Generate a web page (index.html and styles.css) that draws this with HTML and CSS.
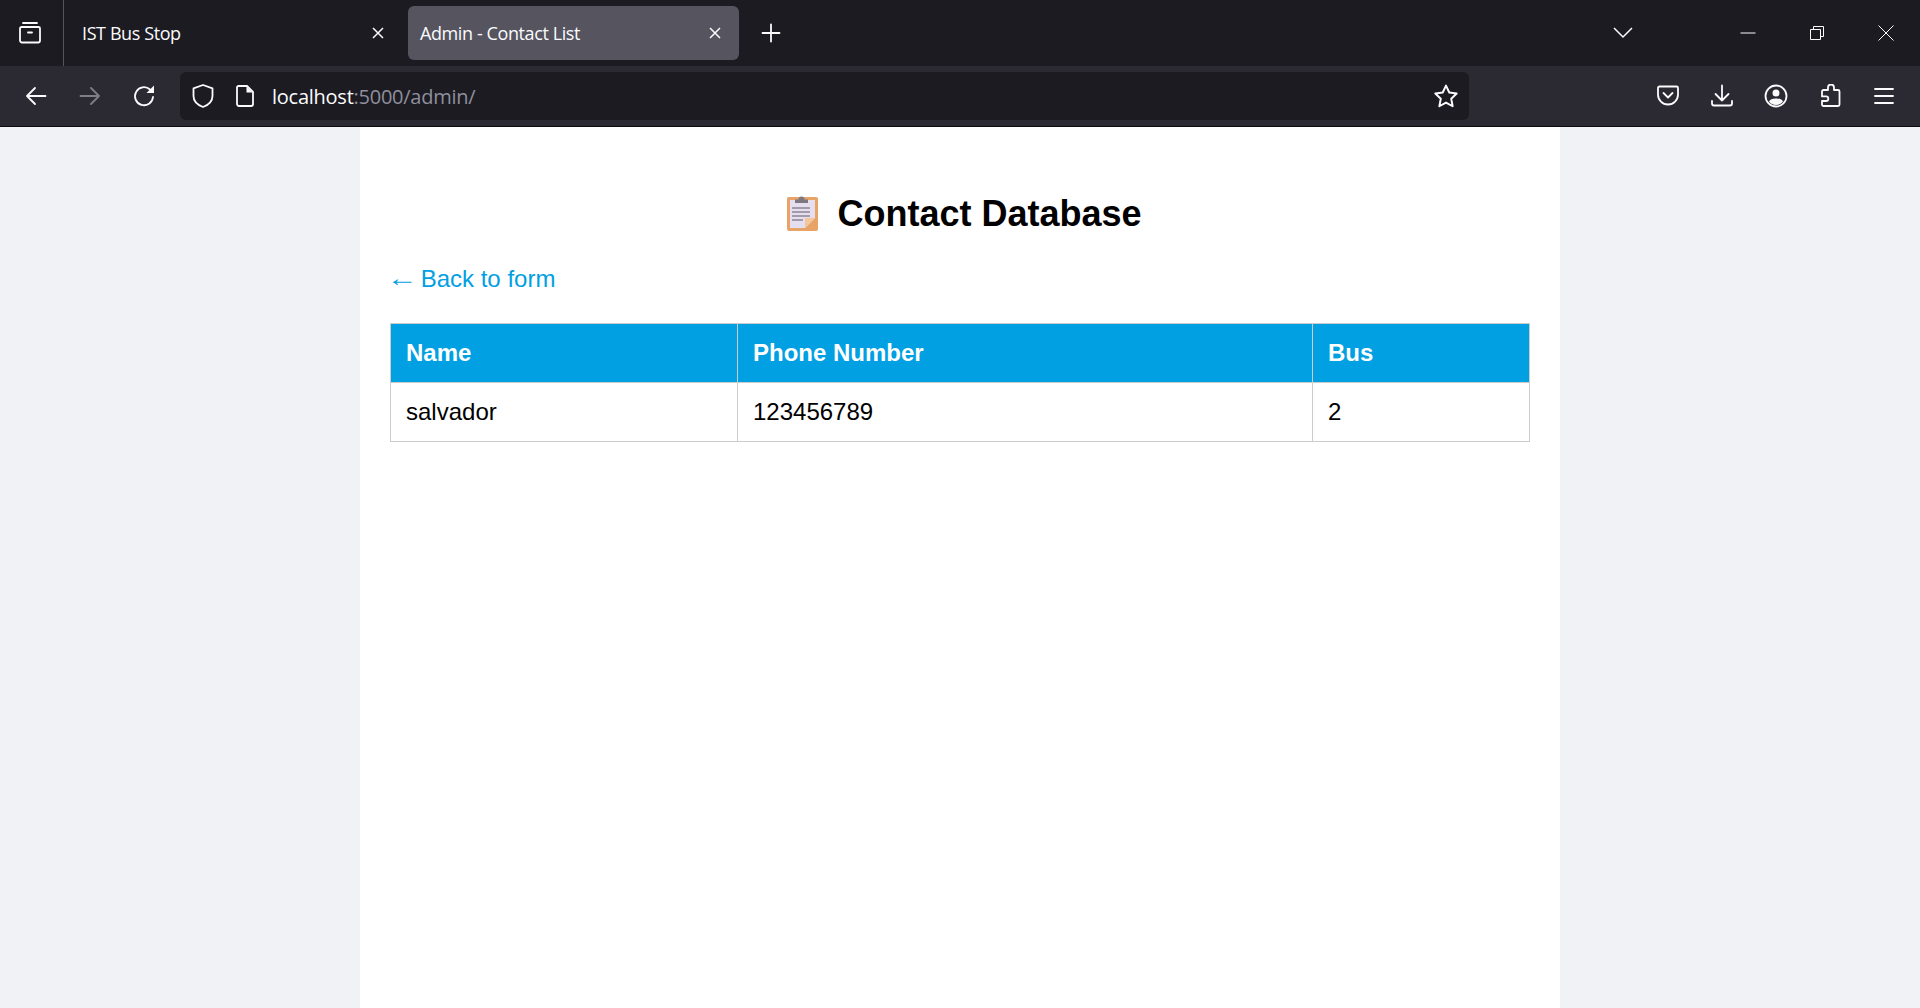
FILE: index.html
```html
<!DOCTYPE html>
<html lang="en">
<head>
    <meta charset="UTF-8">
    <meta name="viewport" content="width=device-width, initial-scale=1.0">
    <title>Admin - Contact List</title>
    <link rel="stylesheet" href="styles.css">
</head>
<body>

<!-- Browser window -->
<header class="browser">
    <div class="tab-strip">
        <div class="views-btn">
            <svg class="icon" viewBox="0 0 24 24"><path d="M5 2h14M2 7.500A1.500 1.500 0 0 1 3.500 6h17A1.500 1.500 0 0 1 22 7.500v12a2 2 0 0 1-2 2H4a2 2 0 0 1-2-2z M10 11.500h4"/></svg>
        </div>
        <div class="tab">
            <span class="tab-title">IST Bus Stop</span>
            <svg class="tab-close" viewBox="0 0 16 16"><path d="M3 3l10 10M13 3L3 13"/></svg>
        </div>
        <div class="tab tab-active">
            <span class="tab-title">Admin - Contact List</span>
            <svg class="tab-close" viewBox="0 0 16 16"><path d="M3 3l10 10M13 3L3 13"/></svg>
        </div>
        <div class="new-tab">
            <svg class="icon" viewBox="0 0 24 24"><path d="M12 3.500v17M3.500 12h17"/></svg>
        </div>
        <div class="tab-list">
            <svg class="icon-thin" viewBox="0 0 20 20"><path d="M1 5l9 9 9-9"/></svg>
        </div>
        <div class="window-btns">
            <div class="window-btn">
                <svg class="icon-win" viewBox="0 0 16 16"><path d="M0.500 8h15"/></svg>
            </div>
            <div class="window-btn">
                <svg class="icon-win" viewBox="0 0 16 16"><path d="M1.500 4.500h10v10h-10zM4.500 4.500v-3h10v10h-3"/></svg>
            </div>
            <div class="window-btn">
                <svg class="icon-win" viewBox="0 0 16 16"><path d="M0.500 0.500l15 15M15.500 0.500l-15 15"/></svg>
            </div>
        </div>
    </div>

    <nav class="nav-bar">
        <div class="nav-btn">
            <svg class="icon" viewBox="0 0 24 24"><path d="M21.500 12H3M11 4l-8 8 8 8"/></svg>
        </div>
        <div class="nav-btn nav-disabled">
            <svg class="icon" viewBox="0 0 24 24"><path d="M2.500 12H21M13 4l8 8-8 8"/></svg>
        </div>
        <div class="nav-btn">
            <svg class="icon" viewBox="0 0 24 24"><path d="M21 13a9 9 0 1 1-3-7.500"/><path class="solid" d="M22 1.500V9h-7.500z"/></svg>
        </div>
        <div class="url-bar">
            <svg class="icon url-shield" viewBox="0 0 24 24"><path d="M12 1l9.500 3.300v7.700c0 5-4.200 9-9.500 11-5.300-2-9.500-6-9.500-11V4.300z"/></svg>
            <svg class="icon url-doc" viewBox="0 0 24 24"><path d="M5.500 2h8.500l6 6v12a2 2 0 0 1-2 2H6a2 2 0 0 1-2-2V3.500A1.500 1.500 0 0 1 5.500 2z"/><path class="solid" d="M13.500 2.500l6 6h-6z"/></svg>
            <span class="url-text">localhost<span class="url-dim">:5000/admin/</span></span>
            <svg class="icon url-star" viewBox="1 1 22 22"><path d="M12 2.500l3 6.300 6.800.9-5 4.800 1.300 6.900-6.100-3.400-6.100 3.400 1.300-6.900-5-4.800 6.800-.9z"/></svg>
        </div>
        <div class="nav-tools">
            <div class="tool-btn">
                <svg class="icon" viewBox="0 0 24 24"><path d="M3.500 2.500h17a1.500 1.500 0 0 1 1.500 1.500v6.500a10 10 0 0 1-20 0V4a1.500 1.500 0 0 1 1.500-1.500z"/><path d="M7.500 9l4.500 4.500L16.500 9"/></svg>
            </div>
            <div class="tool-btn">
                <svg class="icon" viewBox="0 0 24 24"><path d="M12 1.500v15M5.500 10l6.500 6.500 6.500-6.500M2 17v2.500a2 2 0 0 0 2 2h16a2 2 0 0 0 2-2V17"/></svg>
            </div>
            <div class="tool-btn">
                <svg class="icon" viewBox="0 0 24 24"><circle cx="12" cy="12" r="10.500"/><circle class="solid" cx="12" cy="9" r="3.500"/><path class="solid" d="M5 17.500c1-2 3-3 7-3s6 1 7 3c-1.500 2-4 3.500-7 3.500s-5.500-1.500-7-3.500z"/></svg>
            </div>
            <div class="tool-btn">
                <svg class="icon" viewBox="0 0 24 24"><path d="M10 5V3.500a3 3 0 0 1 6 0V6h4a1.500 1.500 0 0 1 1.500 1.500v13a1.500 1.500 0 0 1-1.500 1.500H5.500a1.500 1.500 0 0 1-1.500-1.500V17h4a2.300 2.300 0 0 0 0-4.600H4V7.500A1.500 1.500 0 0 1 5.500 6H10z"/></svg>
            </div>
            <div class="tool-btn">
                <svg class="icon" viewBox="0 0 24 24"><path d="M3 5h18M3 12h18M3 19h18"/></svg>
            </div>
        </div>
    </nav>
</header>

<!-- Page -->
<main class="container">
    <h1 class="page-title">
        <svg class="clipboard" viewBox="0 0 31 36">
            <rect x="0" y="2" width="31" height="34" rx="2" fill="#e8a366"/>
            <path d="M3 5h25v18L18 33H3z" fill="#e4deef"/>
            <path d="M28 23L18 33v-10z" fill="#f3c69b"/>
            <path d="M8 8V4.500h3.500a3 3 0 0 1 6 0H21V8z" fill="#7d7880"/>
            <path d="M5 13h18M5 17h18M5 21h18M5 25h11" stroke="#8b8790" stroke-width="1.500" fill="none"/>
        </svg>
        Contact Database
    </h1>

    <a href="#" class="back-link"><span class="back-arrow">←</span> Back to form</a>

    <table class="contacts">
        <thead>
            <tr>
                <th class="col-name">Name</th>
                <th class="col-phone">Phone Number</th>
                <th>Bus</th>
            </tr>
        </thead>
        <tbody>
            <tr>
                <td>salvador</td>
                <td>123456789</td>
                <td>2</td>
            </tr>
        </tbody>
    </table>
</main>

</body>
</html>
```

FILE: styles.css
```css
* {
    box-sizing: border-box;
}

html, body {
    height: 100%;
}

body {
    margin: 0;
    display: flex;
    flex-direction: column;
    overflow: hidden;
    background-color: #f0f2f5;
    font-family: "Liberation Sans", Arial, sans-serif;
    color: #000;
}

/* Browser window */
.browser {
    flex: none;
    font-family: "Open Sans", sans-serif;
    color: #fbfbfe;
}

.browser svg {
    display: block;
    fill: none;
    stroke: #fbfbfe;
}

.browser svg .solid {
    fill: #fbfbfe;
    stroke: none;
}

.icon {
    width: 24px;
    height: 24px;
    stroke-width: 1.800;
    stroke-linecap: round;
    stroke-linejoin: round;
}

.icon-thin {
    width: 20px;
    height: 20px;
    stroke-width: 1.500;
}

.icon-win {
    width: 16px;
    height: 16px;
    stroke-width: 1;
}

.tab-strip {
    height: 66px;
    display: flex;
    align-items: center;
    background-color: #1c1b22;
}

.views-btn {
    width: 64px;
    height: 66px;
    flex: none;
    display: flex;
    align-items: center;
    padding-left: 18px;
    border-right: 1px solid #55545c;
}

.tab {
    flex: none;
    width: 344px;
    height: 54px;
    display: flex;
    align-items: center;
    justify-content: space-between;
    padding: 0 22px 0 18px;
    border-radius: 6px;
}

.tab-active {
    width: 331px;
    padding: 0 16px 0 12px;
    background-color: #55545f;
}

.tab-title {
    font-size: 18px;
    letter-spacing: -0.4px;
}

.tab-close {
    width: 16px;
    height: 16px;
    stroke-width: 1.500;
}

.new-tab {
    flex: none;
    margin-left: 20px;
}

.tab-list {
    flex: none;
    margin-left: 830px;
}

.window-btns {
    display: flex;
    margin-left: auto;
}

.window-btn {
    width: 69px;
    display: flex;
    justify-content: center;
}

.nav-bar {
    height: 61px;
    display: flex;
    align-items: center;
    padding: 0 0 1px 24px;
    background-color: #2b2a33;
    border-bottom: 1px solid #0c0c0d;
}

.nav-btn {
    width: 54px;
    flex: none;
}

.nav-disabled svg {
    opacity: 0.4;
}

.url-bar {
    width: 1289px;
    height: 48px;
    margin-left: -6px;
    flex: none;
    display: flex;
    align-items: center;
    padding: 0 11px;
    border-radius: 6px;
    background-color: #1c1b22;
}

.url-doc {
    margin-left: 18px;
}

.url-text {
    margin-left: 15px;
    padding-top: 2px;
    flex: 1;
    font-size: 20px;
    letter-spacing: -0.25px;
}

.url-dim {
    color: #8f8f9d;
}

.nav-tools {
    display: flex;
    margin-left: 172px;
}

.tool-btn {
    width: 54px;
    flex: none;
    display: flex;
    justify-content: center;
}

/* Page */
.container {
    flex: 1;
    width: 1200px;
    margin: 0 auto;
    padding: 0 30px;
    background-color: #fff;
}

.page-title {
    margin: 0;
    padding-top: 64px;
    line-height: 46px;
    font-size: 36px;
    font-weight: bold;
    text-align: center;
}

.clipboard {
    display: inline-block;
    width: 31px;
    height: 36px;
    margin: 0 9px;
    vertical-align: -5px;
}

.back-link {
    display: block;
    margin-top: 22px;
    font-size: 24px;
    line-height: 40px;
    color: #00a0e3;
    text-decoration: none;
}

.back-arrow {
    display: inline-block;
    transform: translateY(-1px) scaleX(1.3);
}

.contacts {
    width: 1140px;
    margin-top: 24px;
    border-collapse: collapse;
    table-layout: fixed;
    font-size: 24px;
}

.contacts th,
.contacts td {
    height: 59px;
    padding: 0 15px;
    border: 1px solid #ccc;
    text-align: left;
}

.contacts th {
    background-color: #00a0e3;
    color: #fff;
}

.col-name {
    width: 347px;
}

.col-phone {
    width: 575px;
}
```
